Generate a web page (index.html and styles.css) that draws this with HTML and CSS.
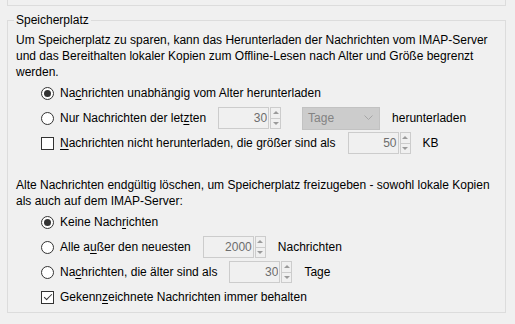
FILE: index.html
```html
<!DOCTYPE html>
<html lang="de">
<head>
  <meta charset="UTF-8">
  <meta name="viewport" content="width=device-width, initial-scale=1.0">
  <title>Speicherplatz</title>
  <link rel="stylesheet" href="styles.css">
</head>
<body>
  <div class="prev-group"></div>

  <fieldset class="group">
    <legend>Speicherplatz</legend>

    <p class="note">Um Speicherplatz zu sparen, kann das Herunterladen der Nachrichten vom IMAP-Server und das Bereithalten lokaler Kopien zum Offline-Lesen nach Alter und Größe begrenzt werden.</p>

    <div class="options">
      <div class="row">
        <label class="choice"><input type="radio" name="download" class="radio" checked><span>Na<u>c</u>hrichten unabhängig vom Alter herunterladen</span></label>
      </div>
      <div class="row">
        <label class="choice"><input type="radio" name="download" class="radio"><span>Nur Nachrichten der let<u>z</u>ten</span></label>
        <span class="spinbox">
          <input class="num" type="text" value="30" disabled>
          <span class="spin"><span class="step up"></span><span class="step down"></span></span>
        </span>
        <span class="dropdown">Tage
          <svg width="9" height="6" viewBox="0 0 9 6"><polyline points="0.5,0.5 4.5,4.5 8.5,0.5" fill="none" stroke="#a6a6a6" stroke-width="1"/></svg>
        </span>
        <span>herunterladen</span>
      </div>
      <div class="row">
        <label class="choice"><input type="checkbox" class="check"><span><u>N</u>achrichten nicht herunterladen, die größer sind als</span></label>
        <span class="spinbox">
          <input class="num" type="text" value="50" disabled>
          <span class="spin"><span class="step up"></span><span class="step down"></span></span>
        </span>
        <span>KB</span>
      </div>
    </div>

    <p class="note second">Alte Nachrichten endgültig löschen, um Speicherplatz freizugeben - sowohl lokale Kopien als auch auf dem IMAP-Server:</p>

    <div class="options">
      <div class="row">
        <label class="choice"><input type="radio" name="purge" class="radio" checked><span>Keine Nach<u>r</u>ichten</span></label>
      </div>
      <div class="row">
        <label class="choice"><input type="radio" name="purge" class="radio"><span>Alle a<u>u</u>ßer den neuesten</span></label>
        <span class="spinbox">
          <input class="num" type="text" value="2000" disabled>
          <span class="spin"><span class="step up"></span><span class="step down"></span></span>
        </span>
        <span>Nachrichten</span>
      </div>
      <div class="row">
        <label class="choice"><input type="radio" name="purge" class="radio"><span>Na<u>c</u>hrichten, die älter sind als</span></label>
        <span class="spinbox">
          <input class="num" type="text" value="30" disabled>
          <span class="spin"><span class="step up"></span><span class="step down"></span></span>
        </span>
        <span>Tage</span>
      </div>
      <div class="row">
        <label class="choice"><input type="checkbox" class="check" checked><span>Gekenn<u>z</u>eichnete Nachrichten immer behalten</span></label>
      </div>
    </div>
  </fieldset>
</body>
</html>
```

FILE: styles.css
```css
body {
  font-family: "Liberation Sans", Arial, sans-serif;
  font-size: 12px;
  line-height: 16px;
  color: #000;
  background: #f0f0f0;
  margin: 0;
  padding: 0 9px 0 7px;
}

.prev-group {
  height: 5px;
  border: 1px solid #dcdcdc;
  border-top: none;
}

.group {
  margin: 6px 0 0;
  padding: 4px 8px 4px 8px;
  border: 1px solid #dcdcdc;
  min-width: 0;
}

.group legend {
  padding: 0 2px;
  margin-left: -2px;
  line-height: 16px;
}

.note {
  margin: 0;
  max-width: 480px;
}

.note.second {
  margin-top: 23px;
}

.options {
  display: flex;
  flex-direction: column;
  gap: 3px;
  margin-top: 2px;
  padding-left: 25px;
}

.row {
  display: flex;
  align-items: center;
  gap: 12px;
  height: 22px;
}

.choice {
  display: flex;
  align-items: center;
  gap: 6px;
}

u {
  text-underline-offset: 2px;
}

.radio,
.check {
  appearance: none;
  margin: 0;
  width: 13px;
  height: 13px;
  border: 1px solid #333;
  background: #fff;
  flex: none;
  display: grid;
  place-items: center;
}

.radio {
  border-radius: 50%;
}

.radio:checked::after {
  content: "";
  width: 7px;
  height: 7px;
  border-radius: 50%;
  background: #333;
}

.check:checked::after {
  content: "";
  width: 7px;
  height: 3px;
  border-left: 1px solid #333;
  border-bottom: 1px solid #333;
  transform: translate(0, -1px) rotate(-45deg);
}

.spinbox {
  display: flex;
  align-items: stretch;
  gap: 1px;
  height: 22px;
}

.num {
  box-sizing: border-box;
  width: 51px;
  height: 22px;
  margin: 0;
  padding: 0 1px 0 2px;
  border: 1px solid #cccccc;
  background: #f0f0f0;
  color: #6d6d6d;
  font: inherit;
  text-align: right;
}

.spin {
  display: flex;
  flex-direction: column;
  width: 11px;
}

.step {
  flex: 1;
  border: 1px solid #cccccc;
  display: grid;
  place-items: center;
}

.step + .step {
  border-top: none;
}

.step::after {
  content: "";
  border-left: 3px solid transparent;
  border-right: 3px solid transparent;
}

.up::after {
  border-bottom: 3px solid #9a9a9a;
}

.down::after {
  border-top: 3px solid #9a9a9a;
}

.dropdown {
  box-sizing: border-box;
  display: flex;
  align-items: center;
  justify-content: space-between;
  width: 78px;
  height: 23px;
  margin-left: 9px;
  padding: 0 6px 0 5px;
  background: #cccccc;
  border: 1px solid #c2c2c2;
  color: #838383;
}
```
